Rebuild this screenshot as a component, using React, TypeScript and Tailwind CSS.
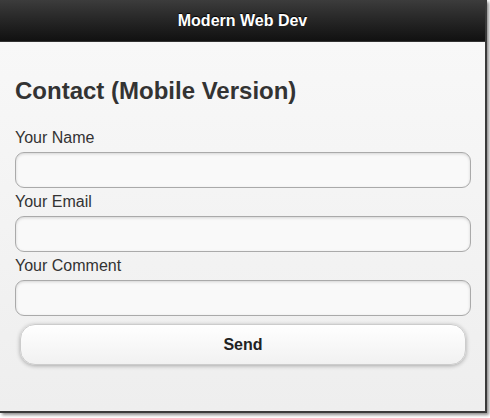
export default function App() {
  const fields = ["Your Name", "Your Email", "Your Comment"];

  return (
    <div className="h-[418px] w-[490px] overflow-hidden bg-white" style={{ fontFamily: '"Liberation Sans", Arial, sans-serif' }}>
      <div className="flex h-[413px] w-[487px] flex-col border-b-2 border-r-2 border-[#3a3a3a] shadow-[2px_2px_3px_rgba(0,0,0,0.45)]">
        <header className="flex h-[42px] shrink-0 items-center justify-center border-b border-[#333] bg-gradient-to-b from-[#3c3c3c] to-[#111111]">
          <h1 className="text-[16px] font-bold text-white [text-shadow:0_-1px_1px_#000]">Modern Web Dev</h1>
        </header>

        <main className="flex-1 bg-gradient-to-b from-[#f8f8f8] to-[#eeeeee] px-[15px] pt-[35px]">
          <h2 className="text-[24px] font-bold leading-[28px] text-[#333]">Contact (Mobile Version)</h2>

          <form className="mt-[23px] flex flex-col" onSubmit={(e) => e.preventDefault()}>
            {fields.map((label) => (
              <div key={label} className="flex flex-col">
                <label className="text-[16px] leading-[20px] text-[#333]">{label}</label>
                <input
                  type="text"
                  className="mb-[4px] mt-[4px] h-[36px] w-[456px] rounded-[9px] border border-[#aaaaaa] bg-[#f9f9f9] px-2 text-[16px] shadow-[inset_0_1px_3px_rgba(0,0,0,0.15)] outline-none"
                />
              </div>
            ))}

            <button
              type="submit"
              className="mx-[5px] mt-[4px] h-[41px] w-[446px] rounded-[15px] border border-[#cccccc] bg-gradient-to-b from-white to-[#f1f1f1] text-[16px] font-bold text-[#222] shadow-[0_1px_4px_rgba(0,0,0,0.3)]"
            >
              Send
            </button>
          </form>
        </main>
      </div>
    </div>
  );
}
